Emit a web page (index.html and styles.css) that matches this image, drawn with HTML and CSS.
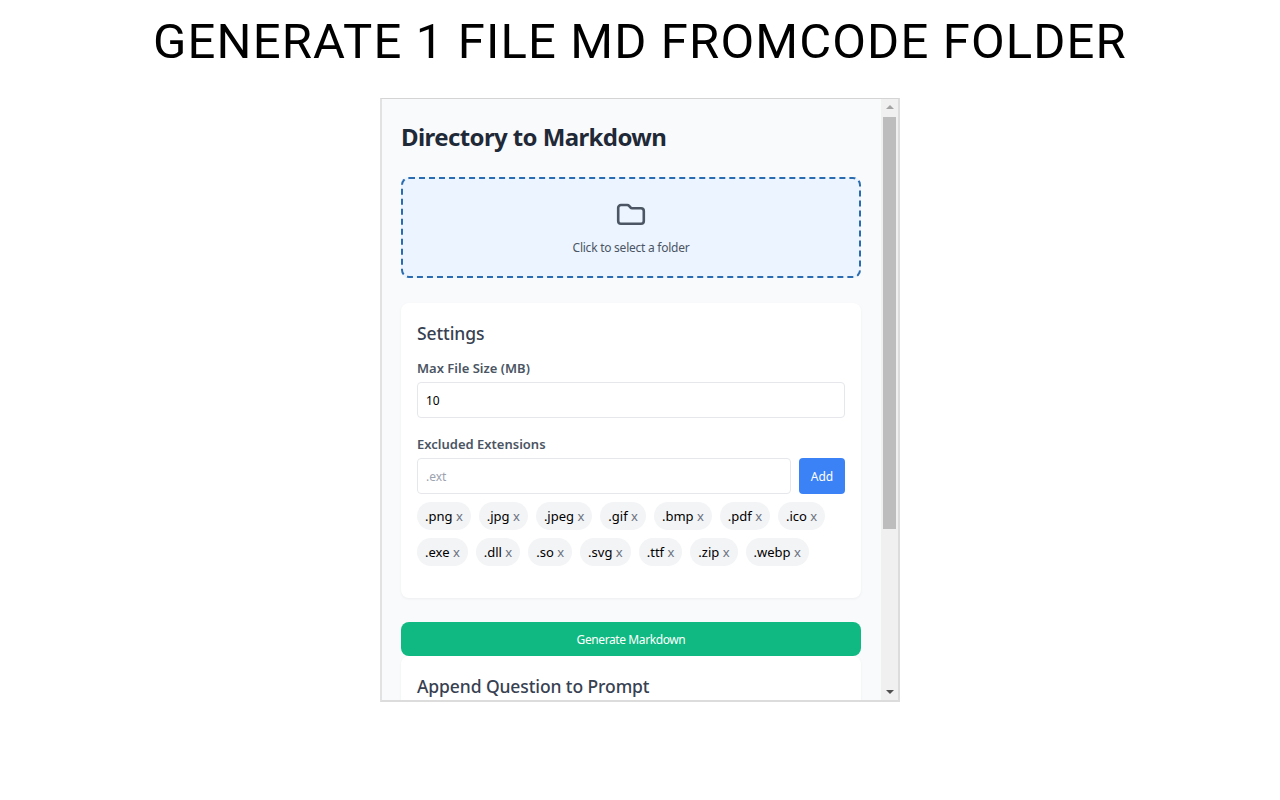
FILE: index.html
```html
<!DOCTYPE html>
<html lang="en">
<head>
<meta charset="utf-8">
<title>Generate 1 file MD from code folder</title>
<link rel="stylesheet" href="styles.css">
</head>
<body>
<div class="stage">
  <h1 class="headline">GENERATE 1 FILE MD FROMCODE FOLDER</h1>
  <div class="popup">
    <div class="content">
      <h2 class="app-title">Directory to Markdown</h2>
      <div class="dropzone">
        <svg class="folder" width="30" height="24" viewBox="0 0 30 24" fill="none" stroke="#4b5563" stroke-width="2.6" stroke-linejoin="round"><path d="M5 3h6.200c.8 0 1.400.3 1.900.9l1.300 1.500c.4.5 1 .8 1.700.8H25c1.600 0 2.800 1.200 2.800 2.800v10c0 1.600-1.200 2.800-2.800 2.800H5c-1.600 0-2.800-1.200-2.800-2.800V5.800C2.200 4.200 3.400 3 5 3z"/></svg>
        <p class="drop-text">Click to select a folder</p>
      </div>
      <section class="card settings">
        <h3 class="card-title">Settings</h3>
        <label class="field-label">Max File Size (MB)</label>
        <input class="text-input size-input" type="text" value="10">
        <label class="field-label">Excluded Extensions</label>
        <div class="add-row">
          <input class="text-input" type="text" placeholder=".ext">
          <button class="add-btn">Add</button>
        </div>
        <div class="tags">
          <span class="tag">.png <i>x</i></span>
          <span class="tag">.jpg <i>x</i></span>
          <span class="tag">.jpeg <i>x</i></span>
          <span class="tag">.gif <i>x</i></span>
          <span class="tag">.bmp <i>x</i></span>
          <span class="tag">.pdf <i>x</i></span>
          <span class="tag">.ico <i>x</i></span>
          <span class="tag">.exe <i>x</i></span>
          <span class="tag">.dll <i>x</i></span>
          <span class="tag">.so <i>x</i></span>
          <span class="tag">.svg <i>x</i></span>
          <span class="tag">.ttf <i>x</i></span>
          <span class="tag">.zip <i>x</i></span>
          <span class="tag">.webp <i>x</i></span>
        </div>
      </section>
      <button class="generate-btn">Generate Markdown</button>
      <section class="card append">
        <h3 class="card-title">Append Question to Prompt</h3>
      </section>
    </div>
    <div class="scrollbar">
      <span class="arrow up"></span>
      <div class="track"><div class="thumb"></div></div>
      <span class="arrow down"></span>
    </div>
  </div>
</div>
</body>
</html>
```
FILE: styles.css
```css
* { box-sizing: border-box; }
html, body { margin: 0; height: 100%; background: #fff; }
body { font-family: "Noto Sans", "Open Sans", sans-serif; overflow: hidden; }
.stage { display: flex; flex-direction: column; align-items: center; height: 800px; }
.headline {
  margin: 0; height: 98px; padding-top: 11px;
  font-family: "Roboto", sans-serif; font-weight: 400; font-size: 49px; line-height: 62px;
  letter-spacing: 1.15px; color: #000; white-space: nowrap;
}
.popup {
  width: 520px; height: 604px; display: flex; background: #f9fafb;
  border: 2px solid #dcdcdc; border-top-color: #d4d4d4; border-left-color: #e2e2e2; border-top-width: 1px;
  overflow: hidden;
}
.content { flex: 1; min-width: 0; padding: 0 20px 0 19px; overflow: hidden; }
.app-title { margin: 0; padding-top: 20px; height: 78px; font-size: 24px; line-height: 36px; font-weight: 700; color: #1f2937; letter-spacing: -0.6px; }
.dropzone {
  height: 101px; border: 2px dashed #2b6cb0; border-radius: 8px; background: #ebf4ff;
  display: flex; flex-direction: column; align-items: center; padding-top: 23px;
}
.folder { display: block; }
.drop-text { margin: 13px 0 0; font-size: 12px; line-height: 18px; color: #4b5563; letter-spacing: -0.25px; }
.card { background: #fff; border-radius: 8px; padding: 16px; box-shadow: 0 1px 3px rgba(0,0,0,.05); }
.settings { margin-top: 25px; height: 295px; }
.card-title { margin: 0 0 12px; font-size: 17.500px; line-height: 28px; font-weight: 500; color: #374151; letter-spacing: -0.1px; }
.field-label { display: block; font-size: 13px; line-height: 18px; font-weight: 600; color: #4b5563; margin-bottom: 5px; }
.text-input {
  display: block; width: 100%; height: 36px; border: 1px solid #e5e7eb; border-radius: 4px; padding: 0 8px;
  font-family: "Noto Sans", sans-serif; font-size: 12px; color: #000; background: #fff; outline: none;
}
.text-input::placeholder { color: #9ca3af; }
.size-input { margin-bottom: 17px; }
.add-row { display: flex; gap: 8px; }
.add-row .text-input { flex: 1; min-width: 0; }
.add-btn {
  width: 46px; height: 36px; border: 0; border-radius: 4px; background: #3b82f6; color: #fff; padding: 0;
  font-family: "Noto Sans", sans-serif; font-size: 12px;
}
.tags { display: flex; flex-wrap: wrap; gap: 8px; margin-top: 8px; }
.tag { height: 28px; padding: 0 8px; border-radius: 14px; background: #f3f4f6; font-size: 13px; line-height: 28px; color: #000; white-space: nowrap; }
.tag i { font-style: normal; color: #6b7280; }
.generate-btn {
  display: block; width: 100%; height: 34px; margin-top: 24px; border: 0; border-radius: 8px; background: #10b981; color: #fff;
  font-family: "Noto Sans", sans-serif; font-size: 12px; letter-spacing: -0.4px;
}
.append { height: 80px; padding-top: 16px; }
.scrollbar { width: 17px; flex: none; background: #f0f0f0; display: flex; flex-direction: column; align-items: center; }
.arrow { flex: none; width: 0; height: 0; border-left: 4px solid transparent; border-right: 4px solid transparent; }
.arrow.up { margin-top: 6px; border-bottom: 4px solid #a3a3a3; }
.arrow.down { margin: 0 0 6px; border-top: 4px solid #505050; }
.track { flex: 1; width: 100%; padding: 8px 2px 0; }
.thumb { height: 412px; background: #bdbdbd; }
```
